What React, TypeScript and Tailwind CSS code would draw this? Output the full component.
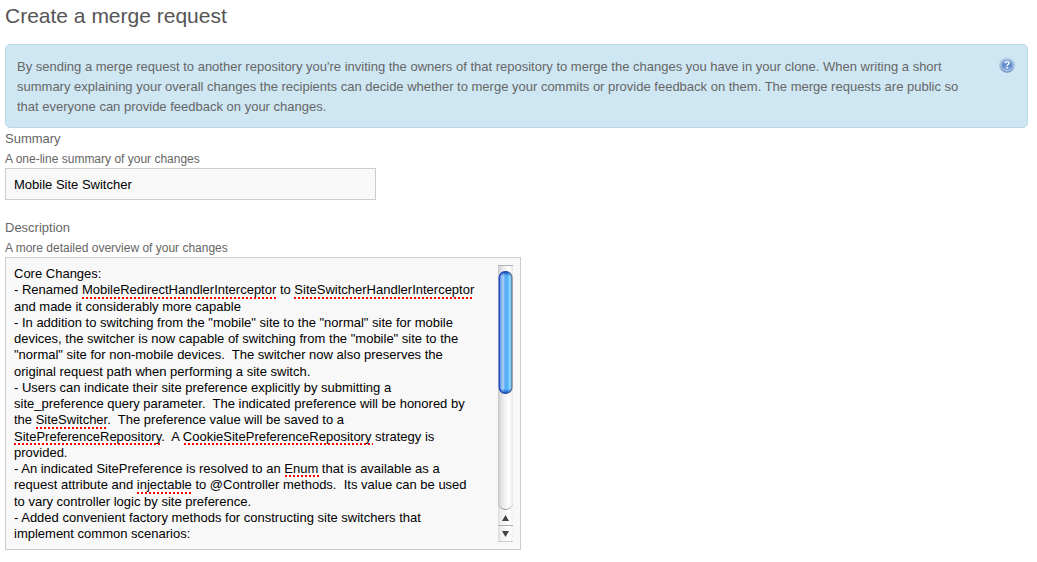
import { useLayoutEffect, useRef, useState } from "react";

const descriptionLines = [
  "Core Changes:",
  "- Renamed MobileRedirectHandlerInterceptor to SiteSwitcherHandlerInterceptor",
  "and made it considerably more capable",
  '- In addition to switching from the "mobile" site to the "normal" site for mobile',
  'devices, the switcher is now capable of switching from the "mobile" site to the',
  '"normal" site for non-mobile devices.  The switcher now also preserves the',
  "original request path when performing a site switch.",
  "- Users can indicate their site preference explicitly by submitting a",
  "site_preference query parameter.  The indicated preference will be honored by",
  "the SiteSwitcher.  The preference value will be saved to a",
  "SitePreferenceRepository.  A CookieSitePreferenceRepository strategy is",
  "provided.",
  "- An indicated SitePreference is resolved to an Enum that is available as a",
  "request attribute and injectable to @Controller methods.  Its value can be used",
  "to vary controller logic by site preference.",
  "- Added convenient factory methods for constructing site switchers that",
  "implement common scenarios:",
];

const unknownWords =
  /\b(MobileRedirectHandlerInterceptor|SiteSwitcherHandlerInterceptor|SiteSwitcher|SitePreferenceRepository|CookieSitePreferenceRepository|Enum|injectable)\b/g;

type Mark = { left: number; width: number };

// Measures where each unknown word falls on its line, in the text area's own font.
function findMarks(text: string, font: string): Mark[][] {
  const context = document.createElement("canvas").getContext("2d");
  if (!context) return [];
  context.font = font;
  const measure = (s: string) => Math.round(context.measureText(s).width);
  return text.split("\n").map((line) =>
    [...line.matchAll(unknownWords)].map((match) => ({
      left: measure(line.slice(0, match.index)),
      width: measure(match[0]),
    })),
  );
}

function SpellingMarks({ marks }: { marks: Mark[][] }) {
  return (
    <div aria-hidden="true" className="pointer-events-none col-start-1 row-start-1">
      {marks.map((line, row) => (
        <div key={row} className="relative h-[1.25em]">
          {line.map((mark) => (
            <span
              key={mark.left}
              style={{ left: mark.left, width: mark.width }}
              className="absolute bottom-0 h-0.5 bg-[repeating-linear-gradient(90deg,#ff0000_0px,#ff0000_2px,transparent_2px,transparent_4px)]"
            />
          ))}
        </div>
      ))}
    </div>
  );
}

function HelpIcon() {
  return (
    <svg viewBox="0 0 16 16" className="size-4" aria-hidden="true">
      <defs>
        <linearGradient id="help-rim" x1="0" y1="0" x2="0" y2="1">
          <stop offset="0" stopColor="#c3d8ee" />
          <stop offset="1" stopColor="#6f92c4" />
        </linearGradient>
        <linearGradient id="help-face" x1="0" y1="0" x2="0" y2="1">
          <stop offset="0" stopColor="#8fb0de" />
          <stop offset="0.5" stopColor="#5b87c8" />
          <stop offset="1" stopColor="#94b9e8" />
        </linearGradient>
      </defs>
      <circle cx="8" cy="8" r="7.7" fill="url(#help-rim)" />
      <circle cx="8" cy="8" r="6" fill="url(#help-face)" stroke="#b4cbe9" strokeWidth="0.9" />
      <path
        d="M6 6.3C6 5.1 6.8 4.6 8 4.6s2 .6 2 1.6c0 1.3-1.9 1.4-1.9 2.7"
        fill="none"
        stroke="#fff"
        strokeWidth="1.4"
      />
      <rect x="7.3" y="9.9" width="1.6" height="1.5" fill="#fff" />
    </svg>
  );
}

function ScrollTrack({ onStep }: { onStep: (amount: number) => void }) {
  return (
    <div className="flex w-[15px] shrink-0 flex-col border-t border-[#b5b5b5] bg-[linear-gradient(90deg,#dcdcdc,#f0f0f0_20%,#fafafa_55%,#ffffff_75%,#f2f2f2)]">
      <div className="flex grow flex-col rounded-b-full border-b border-[#999999] bg-[linear-gradient(90deg,#c6c6c6,#e2e2e2_20%,#f7f7f7_55%,#ffffff_75%,#e8e8e8)] pt-[5px]">
        <svg viewBox="0 0 15 123" className="h-[123px] w-[15px]" aria-hidden="true">
          <defs>
            <linearGradient id="thumb-fill">
              <stop offset="0" stopColor="#2c68d6" />
              <stop offset="0.14" stopColor="#7fb2ee" />
              <stop offset="0.32" stopColor="#a9d0f7" />
              <stop offset="0.44" stopColor="#62b0f6" />
              <stop offset="0.62" stopColor="#4fadfa" />
              <stop offset="0.84" stopColor="#8edcff" />
              <stop offset="1" stopColor="#5aa6e4" />
            </linearGradient>
            <linearGradient id="thumb-ends" x1="0" y1="0" x2="0" y2="1">
              <stop offset="0" stopColor="#0c3fb0" />
              <stop offset="0.035" stopColor="#1a5fd6" stopOpacity="0" />
              <stop offset="0.96" stopColor="#1a5fd6" stopOpacity="0" />
              <stop offset="1" stopColor="#1a55bf" />
            </linearGradient>
            <linearGradient id="thumb-edge">
              <stop offset="0" stopColor="#143cb8" />
              <stop offset="0.6" stopColor="#2b56a8" />
              <stop offset="1" stopColor="#6a7788" />
            </linearGradient>
          </defs>
          <rect x="1.2" y="0.7" width="12.8" height="121.6" rx="6" fill="url(#thumb-fill)" />
          <rect
            x="1.2"
            y="0.7"
            width="12.8"
            height="121.6"
            rx="6"
            fill="url(#thumb-ends)"
            stroke="url(#thumb-edge)"
            strokeWidth="1.2"
          />
        </svg>
      </div>
      <button
        type="button"
        aria-label="Scroll up"
        onClick={() => onStep(-16)}
        className="flex h-4 items-center justify-center border-b border-[#b0b0b0]"
      >
        <svg viewBox="0 0 7 6" className="h-1.5 w-[7px]" aria-hidden="true">
          <path d="M3.5 0 7 6H0z" fill="#444" />
        </svg>
      </button>
      <button
        type="button"
        aria-label="Scroll down"
        onClick={() => onStep(16)}
        className="flex h-4 items-center justify-center border-b border-[#cccccc]"
      >
        <svg viewBox="0 0 7 6" className="h-1.5 w-[7px]" aria-hidden="true">
          <path d="M0 0h7L3.5 6z" fill="#444" />
        </svg>
      </button>
    </div>
  );
}

export default function App() {
  const area = useRef<HTMLTextAreaElement>(null);
  const [description, setDescription] = useState(descriptionLines.join("\n"));
  const [marks, setMarks] = useState<Mark[][]>([]);

  useLayoutEffect(() => {
    if (!area.current) return;
    const { fontSize, fontFamily } = getComputedStyle(area.current);
    setMarks(findMarks(description, `${fontSize} ${fontFamily}`));
  }, [description]);

  return (
    <main className="bg-white pr-[9px] pl-[5px] font-['Liberation_Sans',Arial,sans-serif] text-[#666666]">
      <h1 className="pt-0.5 text-[21px] leading-7 text-[#555555]">Create a merge request</h1>

      <section className="mt-3.5 flex items-start rounded-[5px] border border-[#b8d9ea] bg-[#cfe7f3] px-3 pt-3 pb-2.5 pl-[11px]">
        <p className="max-w-[960px] text-[13px] leading-5">
          By sending a merge request to another repository you're inviting the owners of that
          repository to merge the changes you have in your clone. When writing a short summary
          explaining your overall changes the recipients can decide whether to merge your commits or
          provide feedback on them. The merge requests are public so that everyone can provide
          feedback on your changes.
        </p>
        <button type="button" aria-label="Help" className="ml-auto shrink-0">
          <HelpIcon />
        </button>
      </section>

      <form>
        <label htmlFor="summary" className="block text-[13px] leading-[22px]">
          Summary
        </label>
        <p id="summary-hint" className="text-xs leading-[18px]">
          A one-line summary of your changes
        </p>
        <input
          id="summary"
          type="text"
          aria-describedby="summary-hint"
          defaultValue="Mobile Site Switcher"
          className="block h-8 w-full max-w-[371px] border border-[#cccccc] bg-[#f8f8f8] px-2 text-[13px] text-black outline-none"
        />

        <label htmlFor="description" className="mt-[17px] block text-[13px] leading-[22px]">
          Description
        </label>
        <p id="description-hint" className="text-xs leading-[18px]">
          A more detailed overview of your changes
        </p>
        <div className="flex w-full max-w-[516px] border border-[#cccccc] bg-[#f8f8f8] py-[7px] pr-[7px] pl-2">
          <div className="grid min-w-0 grow overflow-hidden pt-px text-[13px] leading-tight">
            <textarea
              ref={area}
              id="description"
              aria-describedby="description-hint"
              rows={17}
              wrap="off"
              spellCheck={false}
              value={description}
              onChange={(event) => setDescription(event.target.value)}
              className="col-start-1 row-start-1 block w-full resize-none overflow-hidden bg-transparent whitespace-pre text-black outline-none"
            />
            <SpellingMarks marks={marks} />
          </div>
          <ScrollTrack onStep={(top) => area.current?.scrollBy({ top })} />
        </div>
      </form>
    </main>
  );
}
